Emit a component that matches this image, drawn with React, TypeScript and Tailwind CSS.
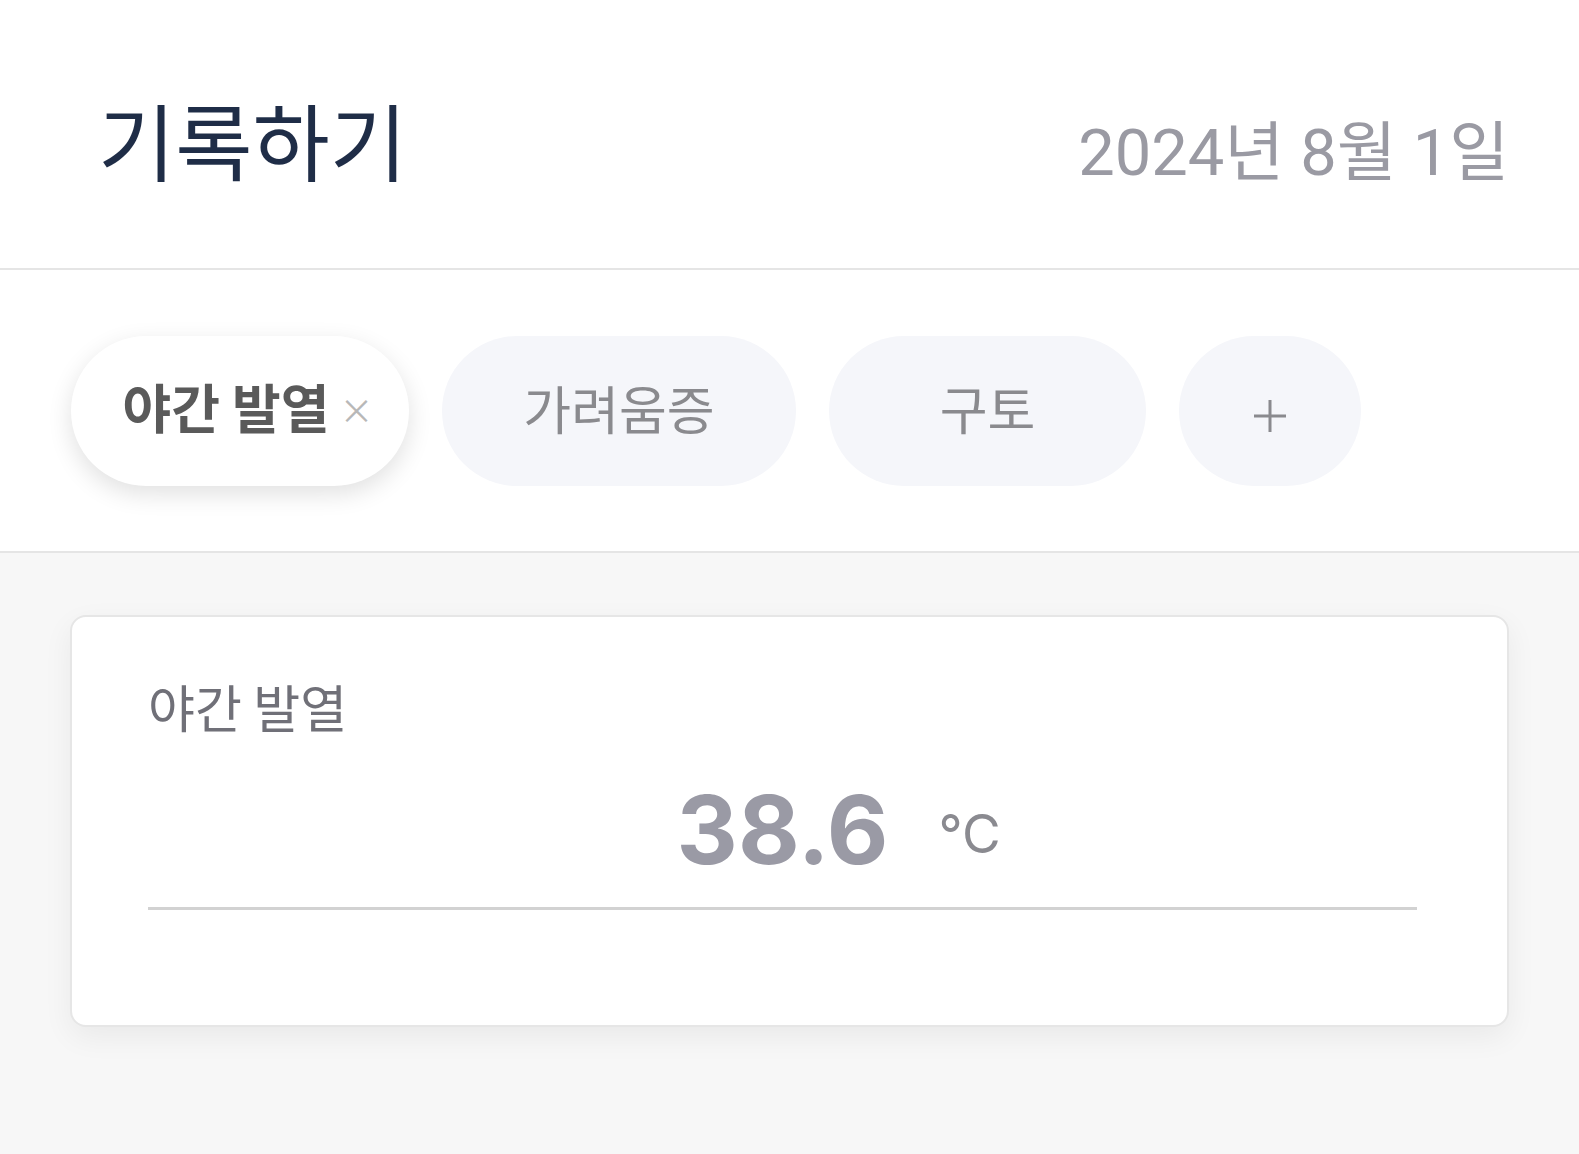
const kr = { fontFamily: '"Noto Sans CJK KR", "Noto Sans", sans-serif' };
const num = { fontFamily: 'Roboto, "Noto Sans CJK KR", sans-serif' };
const inter = { fontFamily: 'Inter, "Noto Sans", sans-serif' };

function Chip({ label, width, active }: { label: string; width: string; active?: boolean }) {
  if (active) {
    return (
      <div
        className={`flex h-[150px] ${width} items-center justify-center gap-[10px] rounded-full bg-white pb-[8px] pl-[16px] shadow-[0_8px_24px_rgba(0,0,0,0.12)]`}
      >
        <span className="text-[53px] font-bold leading-none text-[#5a5a5a]">{label}</span>
        <span className="pt-[6px] text-[34px] leading-none text-[#b8b8b8]">×</span>
      </div>
    );
  }
  return (
    <div className={`flex h-[150px] ${width} items-center justify-center rounded-full bg-[#f5f6fa] pb-[5px]`}>
      <span className="text-[52px] leading-none text-[#8a8a8e]">{label}</span>
    </div>
  );
}

function PlusChip() {
  return (
    <div className="flex h-[150px] w-[182px] items-center justify-center rounded-full bg-[#f5f6fa] pt-[10px]">
      <svg width="34" height="32" viewBox="0 0 34 32" fill="none" stroke="#8a8a8e" strokeWidth="3">
        <path d="M17 0v32M1 16h32" />
      </svg>
    </div>
  );
}

export default function App() {
  return (
    <div className="min-h-[1154px] w-full bg-[#f7f7f7]" style={kr}>
      <div className="bg-white">
        <div className="flex h-[270px] items-center justify-between border-b-2 border-[#e5e5e5] pl-[98px] pr-[70px]">
          <h1 className="pt-[10px] text-[84px] font-normal leading-none text-[#1f2d47]">기록하기</h1>
          <span className="pt-[38px] text-[65px] leading-none text-[#9a9aa3]" style={num}>
            2024년 8월 1일
          </span>
        </div>
        <div className="flex h-[283px] items-center gap-[33px] border-b-2 border-[#e5e5e5] pl-[71px]">
          <Chip label="야간 발열" width="w-[338px]" active />
          <Chip label="가려움증" width="w-[354px]" />
          <Chip label="구토" width="w-[317px]" />
          <PlusChip />
        </div>
      </div>
      <div className="px-[70px] pt-[62px]">
        <div className="h-[412px] rounded-[16px] border-2 border-[#e6e6e6] bg-white pl-[76px] pr-[90px] pt-[64px] shadow-[0_10px_30px_rgba(0,0,0,0.06)]">
          <div className="text-[51px] leading-none text-[#707078]">야간 발열</div>
          <div className="grid grid-cols-[1fr_auto_1fr] items-end border-b-[3px] border-[#d2d2d2] pb-[30px] pt-[50px]">
            <span />
            <span className="text-[95px] font-bold leading-none text-[#9a9aa5]" style={inter}>
              38.6
            </span>
            <span className="pb-[16px] pl-[50px] text-[53px] leading-none text-[#8a8a90]" style={inter}>
              °C
            </span>
          </div>
        </div>
      </div>
    </div>
  );
}
